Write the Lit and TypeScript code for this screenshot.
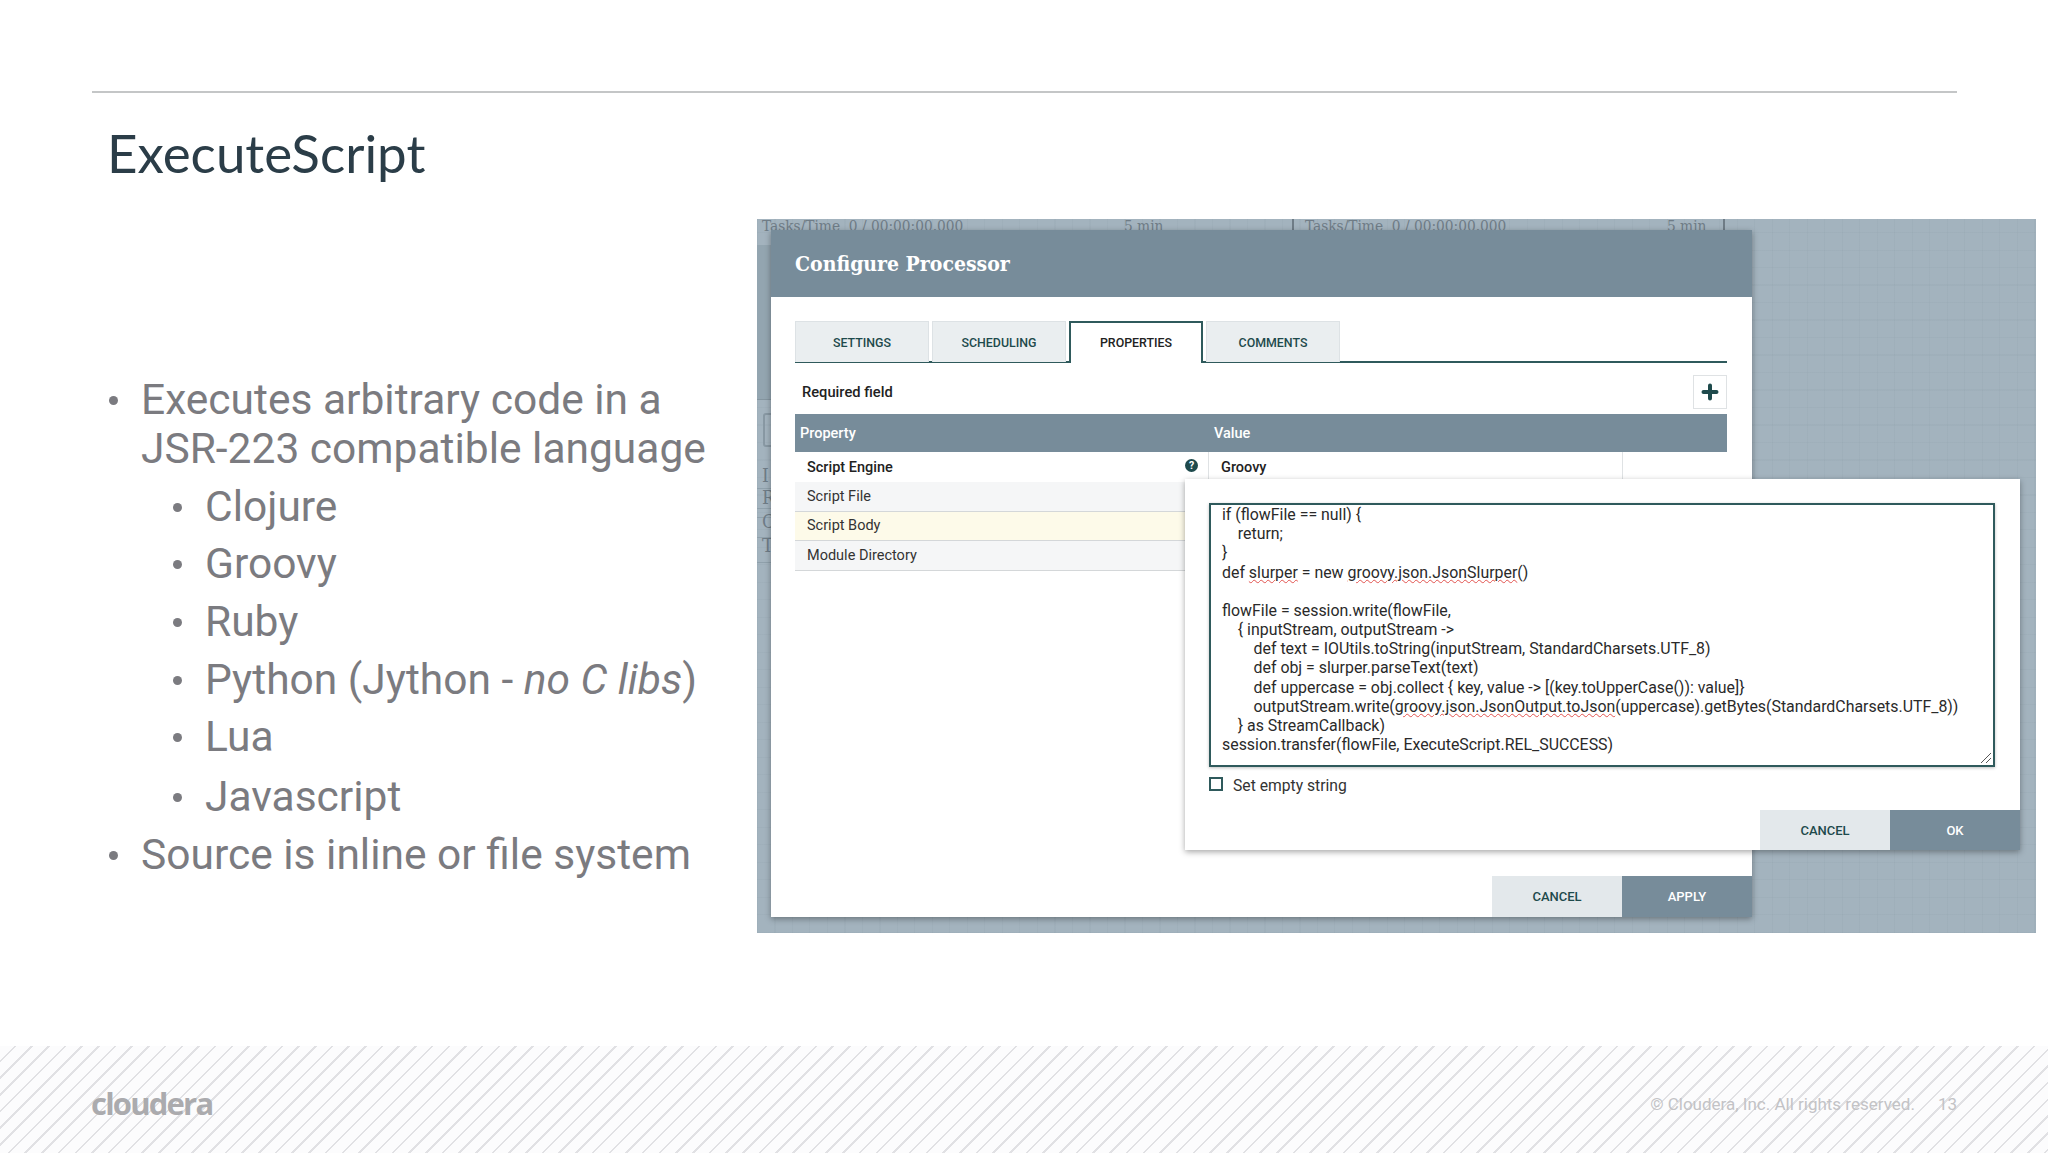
import { LitElement, html, css } from "lit";
import { customElement } from "lit/decorators.js";

const sans = css`Roboto, "Liberation Sans", sans-serif`;

@customElement("app-root")
export class AppRoot extends LitElement {
  static styles = css`
    :host { display: block; width: 2048px; height: 1153px; overflow: hidden; background: #fff; font-family: ${sans}; }
    * { box-sizing: border-box; }
    .slide { height: 1153px; display: flex; flex-direction: column; padding-top: 91px; }
    .rule { height: 2px; margin: 0 91px 0 92px; background: #c4c6c7; flex: none; }
    .title { height: 126px; flex: none; padding: 28px 0 0 107px; font: 400 52.9px/1.2 Lato, sans-serif; color: #2b3d48; }
    .body { flex: 1; display: flex; min-height: 0; }
    .left { width: 757px; flex: none; padding: 156px 0 0 107px; color: #7b7b80; font-size: 42.5px; line-height: 49px; }
    .item { display: flex; margin-bottom: 8.7px; }
    .item.sub { padding-left: 64px; }
    .item.gap { margin-bottom: 10.7px; }
    .dot { width: 34px; flex: none; }
    .dot::before { content: ""; display: block; width: 9px; height: 9px; margin: 21px 0 0 2px; border-radius: 50%; background: #7b7b80; }
    .left em { font-style: italic; }

    .canvas { position: relative; width: 1279px; height: 714px; flex: none; overflow: hidden; background-color: #a3b3be;
      background-image: repeating-linear-gradient(90deg, rgba(120,140,150,.09) 0 1px, transparent 1px 17.5px), repeating-linear-gradient(0deg, rgba(120,140,150,.09) 0 1px, transparent 1px 17.5px); }
    .bg { position: absolute; white-space: pre; color: #6f7c86; font: 15.3px/20px "DejaVu Serif Condensed", serif; }
    .tick { position: absolute; width: 2px; top: 0; height: 11px; background: #6f7c86; }
    .stub { position: absolute; left: 5px; color: #6f7c86; font: 19px/20px "DejaVu Serif Condensed", serif; }
    .band { position: absolute; left: 0; width: 14px; top: 26px; height: 155px; background: #93a5b0; border-bottom: 1px solid #84959f; }
    .pbox { position: absolute; left: 6px; top: 194px; width: 10px; height: 34px; border: 2px solid #8898a3; border-radius: 3px 0 0 3px; }
    .hline { position: absolute; left: 0; width: 14px; height: 1px; background: #8fa0ab; }

    .dialog { position: absolute; left: 14px; top: 11px; width: 981px; height: 687px; background: #fff; box-shadow: 0 2px 6px rgba(0,0,0,.35); display: flex; flex-direction: column; }
    .dh { height: 67px; flex: none; background: #778c9a; color: #fff; padding-left: 24px; display: flex; align-items: center; font: 700 21px "DejaVu Serif Condensed", serif; }
    .content { flex: 1; padding: 24px 25px 0 24px; min-height: 0; }
    .tabs { display: flex; gap: 3px; height: 42px; border-bottom: 2px solid #2f5a5c; }
    .tab { width: 134px; height: 41px; background: #eaeef0; border: 1px solid #dde2e5; border-bottom: 0; display: flex; align-items: center; justify-content: center; font-size: 12.4px; font-weight: 500; color: #1e4a4c; }
    .tab.on { height: 42px; padding-bottom: 1px; background: #fff; border: 2px solid #2f5a5c; border-bottom: 0; color: #222; position: relative; z-index: 1; }
    .req { height: 51px; display: flex; align-items: center; justify-content: space-between; padding: 6px 0 0 7px; font-size: 14.7px; font-weight: 500; color: #222; }
    .plus { width: 34px; height: 34px; border: 1px solid #dfe2e4; display: flex; align-items: center; justify-content: center; background: #fff; }
    .thead { height: 38px; background: #778c9a; color: #fff; display: grid; grid-template-columns: 414px 1fr; align-items: center; font-size: 14.5px; font-weight: 500; padding-left: 5px; }
    .row { height: 29.5px; display: flex; align-items: center; padding-left: 12px; font-size: 14.5px; color: #333; width: 390px; background: #f5f6f7; border-bottom: 1px solid #d4d7d9; }
    .row.first { width: 100%; height: 30px; background: #fff; font-weight: 500; color: #222; border: 0; padding: 0; }
    .row.hl { background: #fdfae9; }
    .row.first .name { width: 414px; padding-left: 12px; height: 100%; display: flex; align-items: center; justify-content: space-between; padding-right: 10px; border-right: 1px solid #dfe2e4; }
    .row.first .val { width: 414px; height: 100%; padding-left: 12px; display: flex; align-items: center; border-right: 1px solid #dfe2e4; }
    .help { width: 13px; height: 13px; border-radius: 50%; background: #1e4a4c; color: #fff; font-size: 10.5px; font-weight: 700; line-height: 13px; text-align: center; margin-top: -3px; }
    .foot { height: 41px; flex: none; display: flex; justify-content: flex-end; }
    .btn { width: 130px; display: flex; align-items: center; justify-content: center; font-size: 13px; font-weight: 500; background: #e3e8eb; color: #1e4a4c; }
    .btn.pri { background: #778c9a; color: #fff; }

    .editor { position: absolute; left: 428px; top: 260px; width: 835px; height: 371px; background: #fff; box-shadow: 0 2px 6px rgba(0,0,0,.35); display: flex; flex-direction: column; padding: 24px 0 0 24px; }
    .ta { position: relative; width: 786px; height: 264px; flex: none; border: 2px solid #2f5a5c; overflow: hidden; padding: 0 0 0 11px; background: #fff; box-shadow: 0 1px 3px rgba(0,0,0,.25); }
    .code { margin: -19px 0 0; font: 400 15.9px/19.15px Roboto, sans-serif; color: #2a2a2a; white-space: pre; }
    .sq { text-decoration: underline wavy #e2534f 1px; text-underline-offset: 1px; }
    .grip { position: absolute; right: 1px; bottom: 1px; }
    .check { display: flex; align-items: center; height: 36px; font-size: 15.7px; color: #333; gap: 10px; }
    .box { width: 14px; height: 14px; border: 2px solid #2f5a5c; flex: none; margin-top: -2px; }
    .efoot { margin: auto 0 0 auto; height: 40px; display: flex; }

    .footer { height: 107px; flex: none; display: flex; align-items: center; justify-content: space-between; padding: 7px 91px 0 91px; background-color: #fcfcfd;
      background-image: repeating-linear-gradient(135deg, transparent 0 10px, #e1e1e4 10px 11.8px); }
    .logo { font: 700 31px "Open Sans", sans-serif; letter-spacing: -1.8px; color: #ababae; }
    .copy { font-size: 17px; color: #c3c3c6; display: flex; gap: 23px; padding-top: 2px; }
  `;

  render() {
    return html`<div class="slide">
      <div class="rule"></div>
      <div class="title">ExecuteScript</div>
      <div class="body">
        <div class="left">
          <div class="item"><span class="dot"></span><span>Executes arbitrary code in a<br />JSR-223 compatible language</span></div>
          <div class="item sub"><span class="dot"></span><span>Clojure</span></div>
          <div class="item sub"><span class="dot"></span><span>Groovy</span></div>
          <div class="item sub"><span class="dot"></span><span>Ruby</span></div>
          <div class="item sub"><span class="dot"></span><span>Python (Jython - <em>no C libs</em>)</span></div>
          <div class="item sub gap"><span class="dot"></span><span>Lua</span></div>
          <div class="item sub"><span class="dot"></span><span>Javascript</span></div>
          <div class="item"><span class="dot"></span><span>Source is inline or file system</span></div>
        </div>
        <div class="canvas">
          <i class="band"></i><i class="pbox"></i>
          <i class="hline" style="top:269px"></i><i class="hline" style="top:289px"></i><i class="hline" style="top:298px"></i><i class="hline" style="top:318px"></i><i class="hline" style="top:343px"></i>
          <span class="bg" style="left:5px;top:-3px">Tasks/Time  0 / 00:00:00.000</span>
          <span class="bg" style="left:367px;top:-3px">5 min</span>
          <span class="bg" style="left:548px;top:-3px">Tasks/Time  0 / 00:00:00.000</span>
          <span class="bg" style="left:910px;top:-3px">5 min</span>
          <i class="tick" style="left:535px"></i><i class="tick" style="left:966px"></i>
          <span class="stub" style="top:246px">I</span><span class="stub" style="top:268px">R</span>
          <span class="stub" style="top:292px">C</span><span class="stub" style="top:316px">T</span>

          <div class="dialog">
            <div class="dh">Configure Processor</div>
            <div class="content">
              <div class="tabs">
                <div class="tab">SETTINGS</div><div class="tab">SCHEDULING</div>
                <div class="tab on">PROPERTIES</div><div class="tab">COMMENTS</div>
              </div>
              <div class="req"><span>Required field</span>
                <span class="plus"><svg width="18" height="18" viewBox="0 0 18 18"><path d="M9 2.5v13M2.5 9h13" stroke="#1e4a4c" stroke-width="4" stroke-linecap="round"/></svg></span>
              </div>
              <div class="thead"><span>Property</span><span>Value</span></div>
              <div class="row first"><div class="name"><span>Script Engine</span><span class="help">?</span></div><div class="val">Groovy</div></div>
              <div class="row">Script File</div>
              <div class="row hl">Script Body</div>
              <div class="row">Module Directory</div>
            </div>
            <div class="foot"><div class="btn">CANCEL</div><div class="btn pri">APPLY</div></div>
          </div>

          <div class="editor">
            <div class="ta">
              <pre class="code">def flowFile = session.get()
if (flowFile == null) {
    return;
}
def <span class="sq">slurper</span> = new <span class="sq">groovy.json.JsonSlurper</span>()

flowFile = session.write(flowFile,
    { inputStream, outputStream -&gt;
        def text = IOUtils.toString(inputStream, StandardCharsets.UTF_8)
        def obj = slurper.parseText(text)
        def uppercase = obj.collect { key, value -&gt; [(key.toUpperCase()): value]}
        outputStream.write(<span class="sq">groovy.json.JsonOutput.toJson</span>(uppercase).getBytes(StandardCharsets.UTF_8))
    } as StreamCallback)
session.transfer(flowFile, ExecuteScript.REL_SUCCESS)</pre>
              <svg class="grip" width="12" height="12" viewBox="0 0 12 12"><path d="M1 11L11 1M6 11l5-5" stroke="#555" stroke-width="1" fill="none"/></svg>
            </div>
            <div class="check"><span class="box"></span><span>Set empty string</span></div>
            <div class="efoot"><div class="btn">CANCEL</div><div class="btn pri">OK</div></div>
          </div>
        </div>
      </div>
      <div class="footer">
        <span class="logo">cloudera</span>
        <span class="copy"><span>© Cloudera, Inc. All rights reserved.</span><span>13</span></span>
      </div>
    </div>`;
  }
}
